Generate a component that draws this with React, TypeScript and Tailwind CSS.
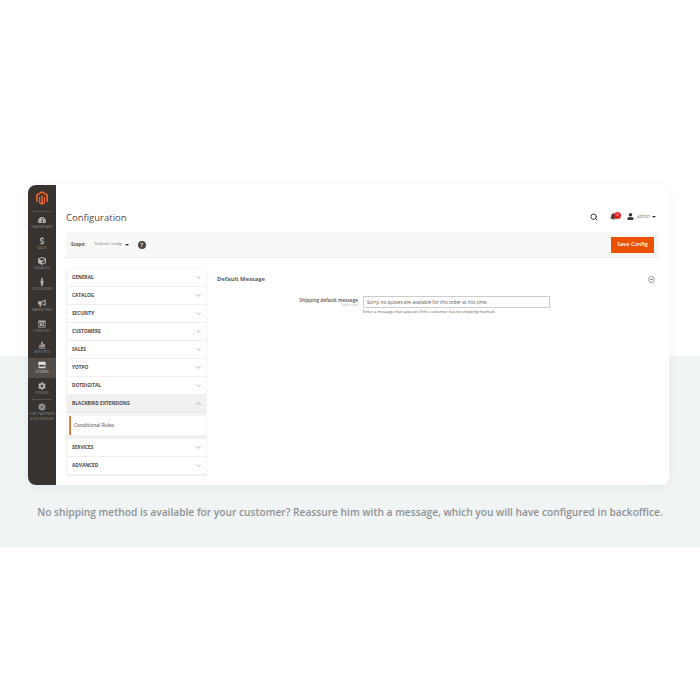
import { ChevronDown, ChevronUp, Search } from "lucide-react";
import { FaBell, FaBullhorn, FaCog, FaCube, FaDollarSign, FaStore, FaTachometerAlt, FaUser, FaMale } from "react-icons/fa";
import { ComponentType } from "react";

function ContentIcon({ className }: { className?: string }) {
  return (
    <svg viewBox="0 0 16 16" className={className} fill="currentColor">
      <path d="M1 1h14v14H1z M2.5 5v8.5h11V5z" fillRule="evenodd" />
      <path d="M4 6.5h3.5v5.5H4z M8.5 6.5h3.5v2H8.5z M8.5 9.5h3.5v2.5H8.5z" />
    </svg>
  );
}

function ReportsIcon({ className }: { className?: string }) {
  return (
    <svg viewBox="0 0 16 16" className={className} fill="currentColor">
      <path d="M1 15h14v-1.2H1z M2.5 13h3V8h-3z M6.5 13h3V1.5h-3z M10.5 13h3V6h-3z" />
    </svg>
  );
}

function PartnersIcon({ className }: { className?: string }) {
  return (
    <svg viewBox="0 0 16 16" className={className} fill="currentColor">
      <path d="M8 0.5 14.5 4.2V11.8L8 15.5 1.5 11.8V4.2Z" />
      <path d="M4 6.5h8M4 9.5h8M8 4v8" stroke="#373330" strokeWidth="0.8" />
    </svg>
  );
}

const menu: { label: string; Icon: ComponentType<{ className?: string }>; active?: boolean }[] = [
  { label: "DASHBOARD", Icon: FaTachometerAlt },
  { label: "SALES", Icon: FaDollarSign },
  { label: "CATALOG", Icon: FaCube },
  { label: "CUSTOMERS", Icon: FaMale },
  { label: "MARKETING", Icon: FaBullhorn },
  { label: "CONTENT", Icon: ContentIcon },
  { label: "REPORTS", Icon: ReportsIcon },
  { label: "STORES", Icon: FaStore, active: true },
  { label: "SYSTEM", Icon: FaCog },
];

const topTabs = ["GENERAL", "CATALOG", "SECURITY", "CUSTOMERS", "SALES", "YOTPO", "DOTDIGITAL"];
const bottomTabs = ["SERVICES", "ADVANCED"];

function Tab({ label }: { label: string }) {
  return (
    <div className="flex h-[18px] items-center justify-between border-b border-[#eeeeee] pl-[5px] pr-[4px]">
      <span className="text-[4.75px] font-bold text-[#4d4540]">{label}</span>
      <ChevronDown className="h-[7px] w-[7px] text-[#8a8a8a]" />
    </div>
  );
}

export default function App() {
  return (
    <div className="min-h-[700px] bg-white font-['Open_Sans',sans-serif]">
      <div className="h-[356px]" />
      <div className="flex h-[191px] flex-col bg-[#f0f4f5]">
        <div className="ml-[28px] mr-[31px] -mt-[171px] flex h-[300px] shrink-0 overflow-hidden rounded-[8px] bg-white shadow-[0_2px_12px_rgba(0,0,0,0.05)]">
          <aside className="flex w-[28px] shrink-0 flex-col items-center bg-[#373330] text-[#8a8681]">
            <div className="flex h-[26px] w-full items-center justify-center">
              <svg viewBox="0 0 24 28" className="h-[14px] w-[12px]">
                <path d="M12 0 L24 7 V21 L20.5 23 V9 L12 4.2 L3.5 9 V23 L0 21 V7 Z M10.3 9.5 L12 8.5 L13.7 9.5 V25 L12 28 L6 24.5 V11.5 L8.3 10.3 V22.5 L10.3 23.7 Z M13.7 23.7 L15.7 22.5 V10.3 L18 11.5 V24.5 L12 28 Z" fill="#e8622a" />
              </svg>
            </div>
            <div className="h-px w-[20px] shrink-0 bg-[#55514d]" />
            {menu.map(({ label, Icon, active }) => (
              <div key={label} className={`flex h-[20.8px] w-full shrink-0 flex-col items-center justify-center ${active ? "bg-[#524d49] text-[#c4c1bd]" : ""}`}>
                <Icon className={`h-[8px] w-[8px] ${active ? "text-[#e4e2df]" : "text-[#b5b2ae]"}`} />
                <span className="mt-[1px] text-[3.6px] leading-[4px]">{label}</span>
              </div>
            ))}
            <div className="flex w-[20px] flex-col items-center border-t border-[#55514d] pt-[3px]">
              <PartnersIcon className="h-[8px] w-[8px] text-[#9c9894]" />
              <span className="mt-[1px] whitespace-nowrap text-[3.4px] leading-[4.4px]">FIND PARTNERS</span>
              <span className="whitespace-nowrap text-[3.4px] leading-[4.4px]">&amp; EXTENSIONS</span>
            </div>
          </aside>

          <main className="flex min-w-0 flex-1 flex-col px-[10px]">
            <header className="flex h-[47px] shrink-0 items-center justify-between pt-[19px]">
              <h1 className="mt-[1px] text-[9.5px] text-[#514943]">Configuration</h1>
              <div className="mb-[3px] flex items-center pr-[3px]">
                <Search className="h-[8px] w-[8px] text-[#41362f]" strokeWidth={3} />
                <div className="relative ml-[12px] h-[8px] w-[11px]">
                  <FaBell className="h-[7px] w-[7px] text-[#41362f]" />
                  <span className="absolute right-0 top-[-1px] flex h-[7px] w-[7px] items-center justify-center rounded-full bg-[#e22626] text-[4px] text-white">2</span>
                </div>
                <FaUser className="ml-[6px] h-[7px] w-[7px] text-[#41362f]" />
                <span className="ml-[3px] text-[4.4px] text-[#8a837d]">admin</span>
                <span className="ml-[2px] h-0 w-0 border-x-[2px] border-t-[2px] border-x-transparent border-t-[#41362f]" />
              </div>
            </header>

            <div className="flex h-[26px] shrink-0 items-center border-b border-[#eeeeee] bg-[#f8f8f8] px-[5px]">
              <span className="text-[4.5px] font-bold text-[#5c544e]">Scope:</span>
              <span className="ml-[9px] text-[4.1px] text-[#77706a]">Default Config</span>
              <span className="ml-[3px] h-0 w-0 border-x-[2px] border-t-[2px] border-x-transparent border-t-[#41362f]" />
              <span className="ml-[9px] flex h-[8px] w-[8px] items-center justify-center rounded-full bg-[#514943] text-[6px] font-bold leading-none text-[#cccccc]">?</span>
              <button className="ml-auto flex h-[16px] w-[43px] items-center justify-center bg-[#eb5202] text-[5.5px] font-semibold text-white">Save Config</button>
            </div>

            <div className="mt-[10px] flex">
              <nav className="w-[141px] shrink-0 border border-t-[#f5f5f5] border-[#f2f2f2]">
                {topTabs.map((t) => <Tab key={t} label={t} />)}
                <div className="flex h-[18px] items-center justify-between border-b border-[#e8e8e8] bg-[#f0f0f0] pl-[5px] pr-[4px]">
                  <span className="text-[4.75px] font-bold text-[#4d4540]">BLACKBIRD EXTENSIONS</span>
                  <ChevronUp className="h-[7px] w-[7px] text-[#777777]" />
                </div>
                <div className="h-[3px] bg-[#f6f6f6]" />
                <div className="ml-[2px] flex h-[19px] items-center border-l-2 border-l-[#ee7a3c] bg-white pl-[3px] text-[4.75px] font-semibold text-[#77706a]">Conditional Rules</div>
                <div className="h-[4px] bg-[#f0f0f0]" />
                {bottomTabs.map((t) => <Tab key={t} label={t} />)}
              </nav>

              <section className="ml-[10px] min-w-0 flex-1">
                <div className="flex h-[22px] items-center justify-between pr-[4px]">
                  <h2 className="text-[5.8px] font-bold text-[#5a5f68]">Default Message</h2>
                  <span className="flex h-[7px] w-[7px] items-center justify-center rounded-full border border-[#9a9a9a]">
                    <span className="h-[0.7px] w-[3px] bg-[#8a8a8a]" />
                  </span>
                </div>
                <div className="mt-[6px] flex">
                  <div className="w-[141px] pt-[1px] text-right">
                    <div className="text-[4.75px] font-semibold leading-[7px] text-[#5c544e]">Shipping default message</div>
                    <div className="text-[3px] leading-[3px] text-[#aaaaaa]">[store view]</div>
                  </div>
                  <div className="ml-[5px] w-[187px]">
                    <div className="flex h-[12px] items-center border border-[#cccccc] bg-white pl-[3px] text-[4.65px] text-[#5c544e]">Sorry, no quotes are available for this order at this time.</div>
                    <p className="mt-[1px] text-[4px] leading-[6px] text-[#5c544e]">Enter a message that appears if the customer has no shipping method.</p>
                  </div>
                </div>
              </section>
            </div>
          </main>
        </div>
        <p className="mt-[19px] text-center text-[10.2px] font-semibold leading-[16px] text-[#8e9296]">No shipping method is available for your customer? Reassure him with a message, which you will have configured in backoffice.</p>
      </div>
    </div>
  );
}
